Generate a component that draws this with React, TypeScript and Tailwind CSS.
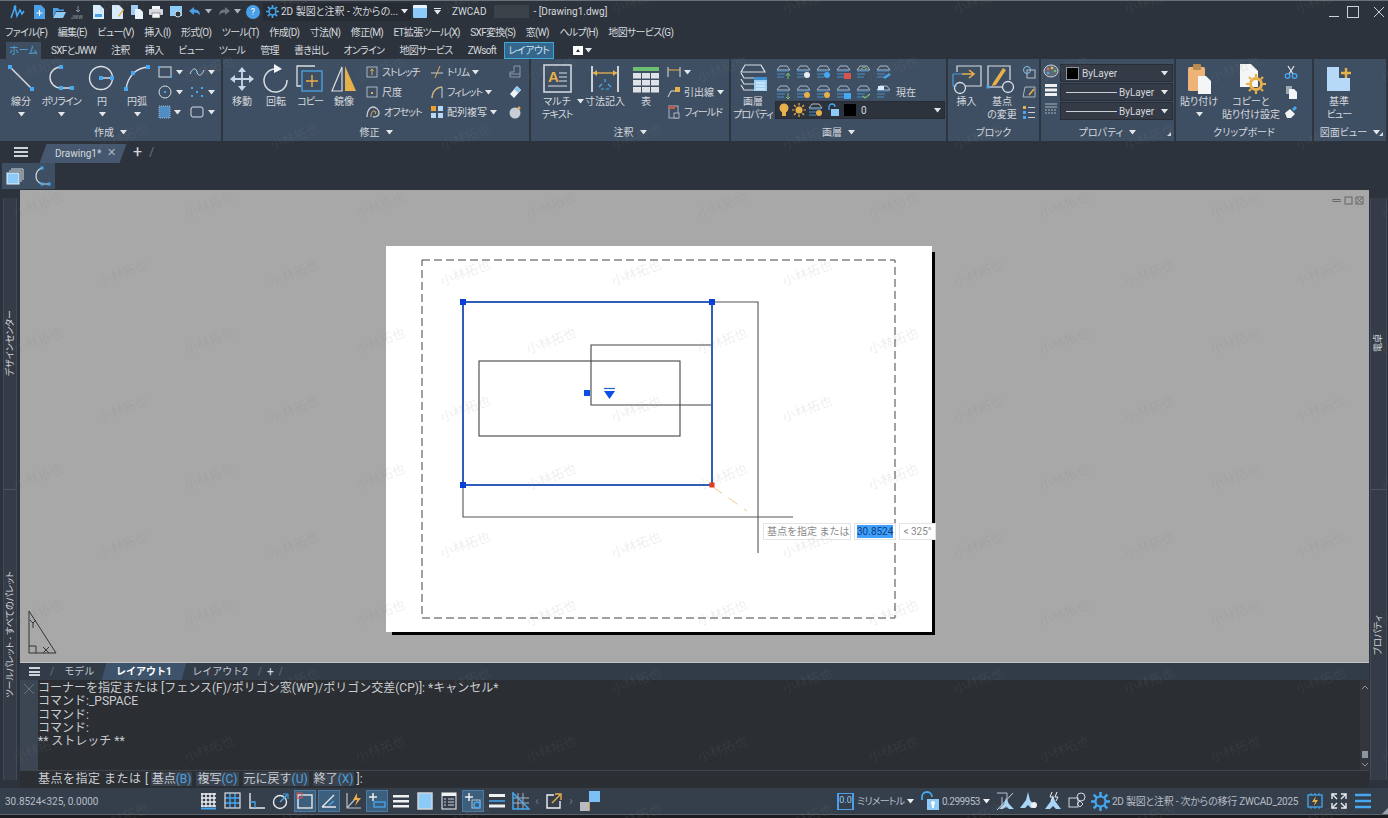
import type { ReactNode } from "react";

const W = "#d9dee4";
const BL = "#45a8f0";
const YE = "#e8b04a";

const Svg = ({ w = 32, h = 32, children }: { w?: number; h?: number; children: ReactNode }) => (
  <svg width={w} height={h} viewBox={`0 0 ${w} ${h}`} fill="none" className="block shrink-0">
    {children}
  </svg>
);

const Caret = ({ c = "#e4e7ea" }: { c?: string }) => (
  <svg width="7" height="5" viewBox="0 0 7 5" className="block shrink-0">
    <path d="M0 0h7L3.5 4.5z" fill={c} />
  </svg>
);

const Sq = ({ x, y, s = 4, c = BL }: { x: number; y: number; s?: number; c?: string }) => (
  <rect x={x - s / 2} y={y - s / 2} width={s} height={s} fill={c} />
);

// kana labels in the ribbon run narrower than kanji
const K = ({ children }: { children: ReactNode }) => <span className="tracking-[-1px]">{children}</span>;

// ---- big ribbon icons
const ILine = () => (
  <Svg>
    <path d="M5 4 27 26" stroke={W} strokeWidth="1.4" />
    <Sq x={5} y={4} />
    <Sq x={27} y={26} />
  </Svg>
);
const IPoly = () => (
  <Svg>
    <path d="M16 4A11 10.5 0 0 0 16 25H27" stroke={W} strokeWidth="1.4" />
    <Sq x={16} y={4} />
    <Sq x={16} y={25} />
    <Sq x={27} y={25} />
  </Svg>
);
const ICircle = () => (
  <Svg>
    <circle cx="15" cy="15" r="11.5" stroke={W} strokeWidth="1.4" />
    <path d="M15 15H27" stroke={W} strokeWidth="1.4" />
    <Sq x={15} y={15} />
    <Sq x={26} y={15} />
  </Svg>
);
const IArc = () => (
  <Svg>
    <path d="M5 26C7 13 15 5 27 4" stroke={W} strokeWidth="1.4" />
    <Sq x={5} y={26} />
    <Sq x={12} y={10} />
    <Sq x={27} y={4} />
  </Svg>
);
const IMove = () => (
  <Svg>
    <path d="M16 7V25M7 16H25" stroke="#c8d6e6" strokeWidth="1.800" />
    <path d="M16 4l4 5h-8zM16 28l4-5h-8zM4 16l5-4v8zM28 16l-5-4v8z" fill="#c8d6e6" />
  </Svg>
);
const IRotate = () => (
  <Svg>
    <path d="M15 6A11.500 11.500 0 1 0 27 17" stroke={W} strokeWidth="1.5" />
    <path d="M14 1l8 5-8 4z" fill="#f2f4f6" />
  </Svg>
);
const ICopy = () => (
  <Svg>
    <path d="M21 3H3V23H7" stroke={W} strokeWidth="1.3" />
    <rect x="8" y="8" width="20" height="20" stroke="#4a9ad8" strokeWidth="1.5" />
    <path d="M18 12V24M12 18H24" stroke={YE} strokeWidth="1.4" />
  </Svg>
);
const IMirror = () => (
  <Svg>
    <path d="M14 4V28H4z" stroke={W} strokeWidth="1.2" />
    <path d="M17 3V28H28z" fill={YE} />
  </Svg>
);
const IMtext = () => (
  <Svg>
    <rect x="3" y="2" width="27" height="27" stroke="#cfd5dc" strokeWidth="1.600" />
    <text x="7" y="19" fontSize="15" fontWeight="700" fill={YE} fontFamily="'Liberation Sans',sans-serif">A</text>
    <path d="M18 10h8M18 14h8M18 18h8M7 23h19" stroke={W} strokeWidth="1.200" />
  </Svg>
);
const IDim = () => (
  <Svg w={32}>
    <path d="M3 3V29M29 3V29" stroke={W} strokeWidth="1.800" />
    <path d="M4 10H28" stroke={YE} strokeWidth="1.300" />
    <path d="M4 10l4-3v6zM28 10l-4-3v6z" fill={YE} />
    <path d="M10 24l3-3M22 24l-3-3M16 19v-3" stroke={BL} strokeWidth="1.300" />
    <path d="M12 26h3M17 26h3" stroke={BL} strokeWidth="1.200" />
  </Svg>
);
const ITable = () => (
  <Svg w={28}>
    <rect x="1" y="4" width="26" height="4" fill="#6fbf73" />
    {[10, 17, 24].flatMap((y) =>
      [1, 10, 19].map((x) => <rect key={`${x}-${y}`} x={x} y={y} width="8" height="5.500" fill="#dfe3e7" />)
    )}
  </Svg>
);
const ILayerProps = () => (
  <Svg w={28} h={32}>
    <path d="M6 2H22L26 9H2z" stroke={W} strokeWidth="1.200" />
    <path d="M2 10 5 15H18M2 16 5 21H16M2 22 5 27H16" stroke={W} strokeWidth="1.200" />
    <rect x="15" y="14" width="13" height="14" fill="#9fd0f6" />
    <rect x="15" y="14" width="13" height="3" fill="#3f8fd0" />
    <path d="M17 20h9M17 23h9M17 26h9" stroke="#f2f6fa" strokeWidth="1" />
  </Svg>
);
const IInsert = () => (
  <Svg w={34}>
    <path d="M7 9V3H31V23H15" stroke={W} strokeWidth="1.200" />
    <path d="M3 11H12M3 11V23H7" stroke="#4a9ad8" strokeWidth="1.200" />
    <path d="M12 11H23M19 7l5 4-5 4" stroke={YE} strokeWidth="1.600" />
    <circle cx="10" cy="25" r="5.500" stroke={W} strokeWidth="1.300" />
  </Svg>
);
const IBase = () => (
  <Svg w={34}>
    <path d="M3 24V3H25V17" stroke={W} strokeWidth="1.200" />
    <path d="M3 24H18" stroke={W} strokeWidth="1.200" />
    <path d="M8 20 18 5l3 2-10 15-4 1z" fill={YE} />
    <circle cx="23" cy="24" r="5.500" stroke={W} strokeWidth="1.300" />
    <Sq x={3} y={24} s={3} />
  </Svg>
);
const IPaste = () => (
  <Svg w={26}>
    <rect x="2" y="4" width="17" height="24" rx="1.500" fill="#eeb477" />
    <rect x="7" y="1" width="8" height="6" rx="1" fill="#b98a52" />
    <path d="M12 13H20L25 18V31H12z" fill="#f4f5f6" />
  </Svg>
);
const ICopyPaste = () => (
  <Svg w={30}>
    <path d="M4 1H15L22 8V24H4z" fill="#f4f5f6" />
    <circle cx="20" cy="21" r="5.500" stroke={YE} strokeWidth="3" />
    <path d="M20 11V14M20 28V31M10 21H13M27 21H30M13 14l2 2M25 26l2 2M27 14l-2 2M15 26l-2 2" stroke={YE} strokeWidth="2.200" />
  </Svg>
);
const IBaseView = () => (
  <Svg w={26} h={26}>
    <path d="M1 1H13V12H24V25H1z" fill="#b6d9f8" />
    <path d="M15 7H25M20 2V12" stroke={YE} strokeWidth="2.400" />
  </Svg>
);

// ---- small ribbon icons
const SRect = () => (
  <Svg w={16} h={14}>
    <rect x="2" y="2" width="12" height="10" stroke={W} />
    <Sq x={2} y={2} s={2} />
    <Sq x={14} y={12} s={2} />
  </Svg>
);
const SSpline = () => (
  <Svg w={16} h={14}>
    <path d="M1 9C4 2 7 3 8 7s4 5 7-2" stroke={W} />
    <Sq x={8} y={7} s={2} />
  </Svg>
);
const SEllipse = () => (
  <Svg w={16} h={14}>
    <circle cx="8" cy="7" r="6" stroke={W} />
    <Sq x={8} y={7} s={2} />
  </Svg>
);
const SPoints = () => (
  <Svg w={16} h={14}>
    {[[3, 3], [13, 3], [8, 7], [3, 11], [13, 11]].map(([x, y]) => (
      <Sq key={`${x}${y}`} x={x} y={y} s={2} />
    ))}
  </Svg>
);
const SHatch = () => (
  <Svg w={14} h={14}>
    <rect x="2" y="1" width="11" height="12" fill="#4f8ec4" stroke="#9db4c9" strokeDasharray="1 1" />
  </Svg>
);
const SRound = () => (
  <Svg w={16} h={14}>
    <rect x="2" y="2" width="12" height="10" rx="2" stroke={W} />
  </Svg>
);
const SStretch = () => (
  <Svg w={14} h={14}>
    <rect x="2" y="2" width="10" height="10" stroke="#aab4c0" />
    <path d="M7 10V4M5.500 6 7 4l1.500 2" stroke={YE} />
  </Svg>
);
const SScale = () => (
  <Svg w={14} h={14}>
    <rect x="2" y="2" width="10" height="10" stroke="#aab4c0" />
    <rect x="6" y="7" width="2" height="2" fill={YE} />
  </Svg>
);
const SOffset = () => (
  <Svg w={16} h={14}>
    <path d="M2 12C2 5 5 2 8 2s6 3 6 6-2 4-6 4" stroke="#c9cfd6" strokeWidth="1.300" />
    <path d="M6 12C6 8 7 6 9 6s2 2 1 3" stroke={YE} />
  </Svg>
);
const STrim = () => (
  <Svg w={14} h={14}>
    <path d="M1 8H13" stroke="#c9cfd6" />
    <path d="M10 1 5 13" stroke={YE} />
  </Svg>
);
const SFillet = () => (
  <Svg w={14} h={14}>
    <path d="M2 13C2 6 6 2 12 2V13" stroke="#c9cfd6" />
    <path d="M2 13C3 6 7 3 12 2" stroke={YE} />
  </Svg>
);
const SArray = () => (
  <Svg w={14} h={14}>
    <rect x="1" y="1" width="5" height="5" fill="#f0a030" />
    <rect x="8" y="1" width="5" height="5" fill="#b5d8f5" />
    <rect x="1" y="8" width="5" height="5" fill="#b5d8f5" />
    <rect x="8" y="8" width="5" height="5" fill="#b5d8f5" />
  </Svg>
);
const SEraseBox = () => (
  <Svg w={14} h={14}>
    <path d="M6 1H12V12H2V7H6z" stroke="#8d98a5" />
    <path d="M2 9H12" stroke="#8d98a5" />
  </Svg>
);
const SEraser = () => (
  <Svg w={14} h={14}>
    <path d="M9 1l4 4-7 8-4-4z" fill="#f1f3f5" />
    <path d="M9 1l4 4-3 3-4-4z" fill="#8ec6f2" />
  </Svg>
);
const SBomb = () => (
  <Svg w={14} h={14}>
    <circle cx="7" cy="8" r="5.500" fill="#c9ced4" />
    <circle cx="11" cy="3" r="1.500" fill={YE} />
  </Svg>
);
const SDimLin = () => (
  <Svg w={14} h={14}>
    <path d="M1 2V12M13 2V12" stroke={W} />
    <path d="M1 5H13" stroke={YE} />
  </Svg>
);
const SLeader = () => (
  <Svg w={14} h={14}>
    <path d="M1 12 4 6H8" stroke={W} />
    <rect x="8" y="2" width="5" height="5" fill={YE} />
  </Svg>
);
const SField = () => (
  <Svg w={14} h={14}>
    <rect x="2" y="1" width="9" height="12" stroke="#aab4c0" />
    <rect x="2" y="1" width="6" height="3" fill="#c25a4f" />
    <rect x="7" y="8" width="5" height="5" stroke="#aab4c0" fill="#3f4f63" />
  </Svg>
);
const Layer = ({ children }: { children?: ReactNode }) => (
  <Svg w={16} h={16}>
    <path d="M4 2H11L14 6H1z" stroke="#aeb8c4" />
    <path d="M1 7H13M1 10H9M1 13H8" stroke="#4a8ec6" />
    {children}
  </Svg>
);
const SmallPlace = () => (
  <Svg w={14} h={14}>
    <rect x="5" y="5" width="8" height="8" rx="0" stroke="#b8c0ca" />
    <circle cx="5" cy="5" r="3.500" stroke="#8ac3ee" />
  </Svg>
);
const SEditBlock = () => (
  <Svg w={14} h={14}>
    <path d="M3 2H13V12H1z" stroke="#aab4c0" />
    <path d="M7 10l5-6" stroke={YE} strokeWidth="1.600" />
  </Svg>
);
const SList = () => (
  <Svg w={14} h={14}>
    <rect x="1" y="1" width="3" height="3" fill={YE} />
    <rect x="1" y="6" width="3" height="3" fill={BL} />
    <rect x="1" y="11" width="3" height="3" fill={BL} />
    <path d="M6 2.500H13M6 7.500H13M6 12.500H13" stroke="#c9cfd6" />
  </Svg>
);
const Palette = () => (
  <Svg w={16} h={14}>
    <ellipse cx="8" cy="7" rx="7" ry="6" stroke="#cbd2da" fill="#5d6672" />
    <circle cx="5" cy="5" r="1.300" fill="#e06a5b" />
    <circle cx="9" cy="4" r="1.300" fill="#e8c34a" />
    <circle cx="12" cy="7" r="1.300" fill="#6fbf73" />
    <circle cx="5" cy="9" r="1.300" fill={BL} />
  </Svg>
);
const LineW = () => (
  <Svg w={14} h={14}>
    <rect x="1" y="1" width="12" height="3" fill="#eef0f2" />
    <rect x="1" y="5.500" width="12" height="3" fill="#eef0f2" />
    <rect x="1" y="10" width="12" height="3" fill="#eef0f2" />
  </Svg>
);
const LineT = () => (
  <Svg w={14} h={14}>
    <path d="M1 2H13M1 5H13" stroke="#aab4c0" />
    <path d="M1 8H13M1 11H13" stroke="#aab4c0" strokeDasharray="2 1" />
  </Svg>
);
const SCut = () => (
  <Svg w={14} h={14}>
    <path d="M4 1l5 8M10 1 5 9" stroke="#e3e6ea" strokeWidth="1.200" />
    <circle cx="3.500" cy="11" r="2.300" stroke={BL} strokeWidth="1.300" />
    <circle cx="10.500" cy="11" r="2.300" stroke={BL} strokeWidth="1.300" />
  </Svg>
);
const SCopyDoc = () => (
  <Svg w={14} h={14}>
    <path d="M2 1H8V9H2z" fill="#9fa8b2" />
    <path d="M5 4H10L13 7V14H5z" fill="#f4f5f6" />
  </Svg>
);
const SBrush = () => (
  <Svg w={14} h={14}>
    <path d="M1 8 6 4l5 5-4 4H3z" fill="#f2f3f5" />
    <path d="M8 4l3-3 2 2-3 3z" fill={BL} />
  </Svg>
);
const Gear = ({ s = 14, c = BL }: { s?: number; c?: string }) => (
  <svg width={s} height={s} viewBox="0 0 14 14" fill="none" className="block shrink-0">
    <circle cx="7" cy="7" r="3.700" stroke={c} strokeWidth="1.600" />
    <path d="M7 0V3M7 11V14M0 7H3M11 7H14M2 2 4 4M10 10 12 12M12 2 10 4M4 10 2 12" stroke={c} strokeWidth="1.800" />
  </svg>
);
const Sun = ({ s = 14 }: { s?: number }) => (
  <svg width={s} height={s} viewBox="0 0 14 14" fill="none" className="block shrink-0">
    <circle cx="7" cy="7" r="3.500" fill={YE} />
    <path d="M7 0V2.500M7 11.500V14M0 7H2.500M11.500 7H14M2 2 3.800 3.800M10.200 10.200 12 12M12 2 10.200 3.800M3.800 10.200 2 12" stroke={YE} strokeWidth="1.200" />
  </svg>
);

// ---- layout helpers
const BigTool = ({ w, icon, label, caret }: { w: string; icon: ReactNode; label: ReactNode; caret?: boolean }) => (
  <div className={`${w} shrink-0 flex flex-col items-center pt-[4px]`}>
    <div className="h-[32px] flex items-center justify-center">{icon}</div>
    <div className="text-[10px] leading-[13px] text-center whitespace-nowrap">{label}</div>
    {caret && (
      <div className="h-[13px] flex items-center">
        <Caret />
      </div>
    )}
  </div>
);

const SmallTool = ({ icon, label, caret }: { icon: ReactNode; label?: ReactNode; caret?: boolean }) => (
  <div className="h-[20px] flex items-center gap-[3px] whitespace-nowrap text-[10px]">
    {icon}
    {label && <span>{label}</span>}
    {caret && <Caret />}
  </div>
);

const Panel = ({ w, title, corner, plain, children }: { w: string; title: ReactNode; corner?: boolean; plain?: boolean; children: ReactNode }) => (
  <div className={`${w} shrink-0 h-full flex flex-col border-r-2 border-[#2f353e] relative`}>
    <div className="h-[66px] flex">{children}</div>
    <div className="h-[15px] flex items-center justify-center gap-[6px] text-[10px] text-[#d3d8de]">
      {title}
      {!plain && <Caret />}
    </div>
    {corner && <div className="absolute right-[3px] bottom-[5px] w-0 h-0 border-l-[4px] border-l-transparent border-b-[4px] border-b-[#d3d8de]" />}
  </div>
);

const Col = ({ w, children }: { w: string; children: ReactNode }) => (
  <div className={`${w} shrink-0 flex flex-col pt-[3px]`}>{children}</div>
);

const LineSelect = ({ children }: { children: ReactNode }) => (
  <div className="h-[18px] w-[113px] bg-[#343b46] border border-[#282d35] flex items-center pl-[5px] pr-[4px] text-[10px] text-[#d5d9de]">
    {children}
    <span className="ml-auto">
      <Caret />
    </span>
  </div>
);

const SideTab = ({ label }: { label: string }) => (
  <div className="flex-1 flex items-center justify-center border-t border-[#4a5461] first:border-t-0">
    <span className="[writing-mode:vertical-rl] [text-orientation:sideways] rotate-180 text-[9px] leading-none text-[#d5d9de] whitespace-nowrap">{label}</span>
  </div>
);

const StatBtn = ({ on, children }: { on?: boolean; children: ReactNode }) => (
  <div className={`w-[22px] h-[22px] flex items-center justify-center border ${on ? "bg-[#3d5f7e] border-[#4b7ba3]" : "border-transparent"}`}>
    {children}
  </div>
);

const Chip = ({ a, b }: { a: string; b: string }) => (
  <span className="bg-[#3a424d] px-[1px] mx-[2px]">
    {a}
    <span className="text-[#4aa3e0]">{b}</span>
  </span>
);

// watermark rows repeat every 68px, every other row shifted by half a step
const marks: { x: number; y: number }[] = [];
for (let k = -5; k <= 7; k++) {
  const start = k % 2 === 0 ? 38 : 123;
  for (let i = 0; i < 9; i++) marks.push({ x: start + i * 171, y: 340 + k * 68 });
}

const menu = ["ファイル(F)", "編集(E)", "ビュー(V)", "挿入(I)", "形式(O)", "ツール(T)", "作成(D)", "寸法(N)", "修正(M)", "ET拡張ツール(X)", "SXF変換(S)", "窓(W)", "ヘルプ(H)", "地図サービス(G)"];
const tabs = ["SXFとJWW", "注釈", "挿入", "ビュー", "ツール", "管理", "書き出し", "オンライン", "地図サービス", "ZWsoft"];
const cmdLines = ["コーナーを指定または [フェンス(F)/ポリゴン窓(WP)/ポリゴン交差(CP)]: *キャンセル*", "コマンド:_PSPACE", "コマンド:", "コマンド:", "** ストレッチ **"];

const QuickDoc = ({ c = "#cfe6fa", children }: { c?: string; children?: ReactNode }) => (
  <Svg w={14} h={16}>
    <path d="M2 1H9L13 5V15H2z" fill={c} />
    {children}
  </Svg>
);

export default function App() {
  return (
    <div className="w-[1388px] h-[818px] relative overflow-hidden bg-[#2d333c] text-[#d5d9de] flex flex-col [font-feature-settings:'palt'] font-['Roboto','Noto_Sans_CJK_JP',sans-serif]">
      {/* title bar */}
      <div className="h-[22px] shrink-0 flex items-center border-t border-[#6b7078] text-[10px] relative">
        <div className="w-[40px] pl-[9px]">
          <Svg w={16} h={16}>
            <path d="M2 14 6 3l2 9 3-6 2 4 2-3" stroke={BL} strokeWidth="1.600" />
            <circle cx="6" cy="3" r="1.500" fill={BL} />
          </Svg>
        </div>
        <div className="flex items-center gap-[5.500px] -ml-[8px]">
          <QuickDoc c="#4a9fe6"><path d="M7.500 6V12M4.500 9H10.500" stroke="#fff" /></QuickDoc>
          <Svg w={14} h={16}>
            <path d="M1 4H6L7 5.500H12V7H4L1 13z" fill="#4a9fe6" />
            <path d="M4 8H14L11 14H1z" fill="#8ccaf7" />
          </Svg>
          <Svg w={14} h={16}>
            <path d="M7 2V8M5 6l2 2 2-2" stroke="#8d98a5" />
            <text x="0" y="15" fontSize="5" fill="#9aa3ad">JWW</text>
          </Svg>
          <QuickDoc c="#d8ecfc"><rect x="4" y="10" width="7" height="3" fill="#4a9fe6" /></QuickDoc>
          <QuickDoc c="#d8ecfc"><path d="M8 12l5-7 1 1-5 7z" fill={YE} /></QuickDoc>
          <Svg w={14} h={16}>
            <path d="M1 1H8V11H1z" fill="#9fcdf2" />
            <path d="M5 5H10L13 8V15H5z" fill="#e8f3fc" />
          </Svg>
          <Svg w={14} h={16}>
            <rect x="3" y="2" width="8" height="4" fill="#f2f4f6" />
            <rect x="0" y="5" width="14" height="6" rx="1" fill="#d6dade" />
            <rect x="3" y="9" width="8" height="5" fill="#f2f4f6" stroke="#444" strokeWidth=".5" />
          </Svg>
          <Svg w={14} h={16}>
            <rect x="1" y="2" width="12" height="10" fill="#8ccaf7" />
            <circle cx="9" cy="10" r="3" fill="#2d333c" stroke="#d5d9de" />
          </Svg>
          <Svg w={14} h={16}>
            <path d="M6 3 1 7l5 4V8.500c3 0 5 1 6 3 0-4-2-6-6-6z" fill="#4a9fe6" />
          </Svg>
          <div className="-ml-[3px]"><Caret c="#aeb5be" /></div>
          <Svg w={14} h={16}>
            <path d="M8 3l5 4-5 4V8.500c-3 0-5 1-6 3 0-4 2-6 6-6z" fill="#6c7480" />
          </Svg>
          <div className="-ml-[3px]"><Caret c="#aeb5be" /></div>
          <div className="w-[14px] h-[14px] rounded-full bg-[#4a9fe6] text-white text-[9px] leading-[14px] text-center">?</div>
        </div>
        <div className="ml-[3px] w-[148px] h-[18px] bg-[#272c34] rounded-[2px] flex items-center pl-[3px] pr-[3px] gap-[2px]">
          <Gear s={13} />
          <span className="whitespace-nowrap">2D 製図と注釈 - 次からの...</span>
          <span className="ml-auto"><Caret /></span>
        </div>
        <div className="ml-[2px] w-[14px] h-[13px] bg-[#8ccaf7] rounded-[1px] border-t-[3px] border-[#e8f3fc]" />
        <div className="ml-[7px] flex flex-col gap-[1px]">
          <div className="w-[7px] h-[1px] bg-[#e4e7ea]" />
          <Caret />
        </div>
        <span className="ml-[11px]">ZWCAD</span>
        <div className="ml-[8px] w-[35px] h-[13px] bg-[#3c4249]" />
        <span className="ml-[4px] whitespace-nowrap">- [Drawing1.dwg]</span>
        <div className="ml-auto flex items-center gap-[8px] pr-[1px]">
          <div className="w-[10px] h-[1px] bg-[#cdd2d8] mt-[9px]" />
          <div className="w-[12px] h-[12px] border border-[#cdd2d8]" />
          <Svg w={20} h={12}>
            <path d="M7 1 17 11M17 1 7 11" stroke="#cdd2d8" />
          </Svg>
        </div>
      </div>

      {/* menu bar */}
      <div className="h-[20px] shrink-0 flex items-center pl-[5px] gap-[10.500px] text-[10px] tracking-[-0.7px] whitespace-nowrap">
        {menu.map((m) => (
          <span key={m}>{m}</span>
        ))}
      </div>

      {/* ribbon tabs */}
      <div className="h-[17px] shrink-0 flex items-stretch pl-[6px] text-[10px] whitespace-nowrap">
        <div className="w-[35px] bg-[#3f4f63] text-[#4ea6dc] flex items-center justify-center mr-[10px]">ホーム</div>
        <div className="w-[445px] flex items-center justify-between tracking-[-0.7px]">
          {tabs.map((t) => (
            <span key={t}>{t}</span>
          ))}
        </div>
        <div className="ml-[8px] w-[50px] bg-[#35678c] border border-[#3fa7d6] flex items-center justify-center text-[#cfe3f2] tracking-[-0.5px]">レイアウト</div>
        <div className="ml-[19px] flex items-center gap-[2px]">
          <div className="w-[10px] h-[9px] bg-white flex items-center justify-center">
            <div className="w-0 h-0 border-x-[2px] border-x-transparent border-b-[3px] border-b-[#333]" />
          </div>
          <Caret />
        </div>
      </div>

      {/* ribbon */}
      <div className="h-[82px] shrink-0 bg-[#3f4f63] flex text-[#d5d9de]">
        <Panel w="w-[223px]" title="作成">
          <div className="w-[4px]" />
          <BigTool w="w-[34px]" icon={<ILine />} label="線分" caret />
          <BigTool w="w-[46px]" icon={<IPoly />} label={<K>ポリライン</K>} caret />
          <BigTool w="w-[36px]" icon={<ICircle />} label="円" caret />
          <BigTool w="w-[34px]" icon={<IArc />} label="円弧" caret />
          <div className="w-[3px]" />
          <Col w="w-[32px]">
            <SmallTool icon={<SRect />} caret />
            <SmallTool icon={<SEllipse />} caret />
            <SmallTool icon={<SHatch />} caret />
          </Col>
          <Col w="w-[30px]">
            <SmallTool icon={<SSpline />} caret />
            <SmallTool icon={<SPoints />} caret />
            <SmallTool icon={<SRound />} caret />
          </Col>
        </Panel>
        <Panel w="w-[308px]" title="修正">
          <div className="w-[2px]" />
          <BigTool w="w-[34px]" icon={<IMove />} label="移動" />
          <BigTool w="w-[34px]" icon={<IRotate />} label="回転" />
          <BigTool w="w-[34px]" icon={<ICopy />} label={<K>コピー</K>} />
          <BigTool w="w-[34px]" icon={<IMirror />} label="鏡像" />
          <div className="w-[4px]" />
          <Col w="w-[65px]">
            <SmallTool icon={<SStretch />} label={<K>ストレッチ</K>} />
            <SmallTool icon={<SScale />} label="尺度" />
            <SmallTool icon={<SOffset />} label={<K>オフセット</K>} />
          </Col>
          <Col w="w-[78px]">
            <SmallTool icon={<STrim />} label={<K>トリム</K>} caret />
            <SmallTool icon={<SFillet />} label={<K>フィレット</K>} caret />
            <SmallTool icon={<SArray />} label="配列複写" caret />
          </Col>
          <Col w="w-[16px]">
            <SmallTool icon={<SEraseBox />} />
            <SmallTool icon={<SEraser />} />
            <SmallTool icon={<SBomb />} />
          </Col>
        </Panel>
        <Panel w="w-[200px]" title="注釈">
          <div className="w-[2px]" />
          <BigTool
            w="w-[48px]"
            icon={<IMtext />}
            label={
              <span className="flex flex-col items-center">
                <span className="relative">
                  マルチ
                  <span className="absolute -right-[13px] top-[4px]">
                    <Caret />
                  </span>
                </span>
                <K>テキスト</K>
              </span>
            }
          />
          <BigTool w="w-[48px]" icon={<IDim />} label="寸法記入" />
          <BigTool w="w-[34px]" icon={<ITable />} label="表" />
          <div className="w-[4px]" />
          <Col w="w-[60px]">
            <SmallTool icon={<SDimLin />} caret />
            <SmallTool icon={<SLeader />} label="引出線" caret />
            <SmallTool icon={<SField />} label={<K>フィールド</K>} />
          </Col>
        </Panel>
        <Panel w="w-[217px]" title="画層">
          <BigTool w="w-[44px]" icon={<ILayerProps />} label={<span className="flex flex-col"><span>画層</span><K>プロパティ</K></span>} />
          <div className="w-[171px] shrink-0 flex flex-col pt-[3px]">
            <div className="h-[20px] flex items-center gap-[4px] pl-[1px]">
              <Layer><path d="M12 9v6M10 12l2-3 2 3" stroke="#6fbf73" /></Layer>
              <Layer><circle cx="11" cy="11" r="3" fill="#e8edf2" /></Layer>
              <Layer><circle cx="11" cy="11" r="3" fill={BL} /></Layer>
              <Layer><rect x="8" y="9" width="7" height="6" fill="#d6544a" /></Layer>
              <Layer><path d="M5 5l3-2 3 2" stroke="#6fbf73" /></Layer>
              <Layer><path d="M8 14l6-4" stroke={BL} strokeWidth="2.500" /></Layer>
            </div>
            <div className="h-[20px] flex items-center gap-[4px] pl-[1px] text-[10px]">
              <Layer><path d="M12 9v6M10 13l2 2 2-2" stroke="#6fbf73" /></Layer>
              <Layer><circle cx="11" cy="11" r="3" fill={YE} /></Layer>
              <Layer><circle cx="11" cy="11" r="3" fill={YE} /></Layer>
              <Layer><rect x="8" y="9" width="7" height="6" fill={BL} /></Layer>
              <Layer><path d="M7 12l2 2 5-4" stroke="#6fbf73" strokeWidth="1.300" /></Layer>
              <Layer><rect x="2" y="2" width="6" height="4" fill="#d8ecfc" /></Layer>
              <span>現在</span>
            </div>
            <div className="-mt-[1px] h-[18px] w-[170px] bg-[#2d333c] border border-[#282d35] flex items-center pl-[2px] pr-[3px] gap-[2px] text-[10px]">
              <Svg w={12} h={14}>
                <circle cx="6" cy="5" r="4.500" fill={YE} />
                <rect x="4" y="9" width="4" height="4" fill={YE} />
              </Svg>
              <Sun />
              <Layer><circle cx="11" cy="11" r="3" fill={YE} /></Layer>
              <Svg w={14} h={14}>
                <path d="M3 7V4a3 3 0 0 1 6 0" stroke={BL} strokeWidth="1.300" />
                <rect x="5" y="6" width="8" height="7" fill="#8ccaf7" />
              </Svg>
              <div className="w-[12px] h-[12px] bg-black ml-[2px]" />
              <span className="ml-[3px]">0</span>
              <span className="ml-auto"><Caret /></span>
            </div>
          </div>
        </Panel>
        <Panel w="w-[93px]" title="ブロック" plain>
          <BigTool w="w-[37px]" icon={<IInsert />} label="挿入" />
          <BigTool w="w-[34px]" icon={<IBase />} label={<span className="flex flex-col"><span>基点</span><span>の変更</span></span>} />
          <Col w="w-[20px]">
            <div className="pl-[3px]"><SmallTool icon={<SmallPlace />} /></div>
            <div className="pl-[3px]"><SmallTool icon={<SEditBlock />} /></div>
            <div className="pl-[3px]"><SmallTool icon={<SList />} /></div>
          </Col>
        </Panel>
        <Panel w="w-[135px]" title="プロパティ" corner>
          <div className="w-[19px] shrink-0 flex flex-col pt-[5px] items-center gap-[5px]">
            <div className="h-[14px]"><Palette /></div>
            <div className="h-[14px]"><LineW /></div>
            <div className="h-[14px]"><LineT /></div>
          </div>
          <div className="flex flex-col pt-[5px] gap-[1px]">
            <LineSelect>
              <div className="w-[13px] h-[13px] bg-black border border-[#8d96a0] mr-[3px]" />
              ByLayer
            </LineSelect>
            <LineSelect>
              <div className="w-[51px] h-[1px] bg-[#c9ced4] mr-[2px]" />
              ByLayer
            </LineSelect>
            <LineSelect>
              <div className="w-[51px] h-[1px] bg-[#c9ced4] mr-[2px]" />
              ByLayer
            </LineSelect>
          </div>
        </Panel>
        <Panel w="w-[138px]" title="クリップボード" plain>
          <BigTool w="w-[46px]" icon={<IPaste />} label="貼り付け" caret />
          <BigTool w="w-[58px]" icon={<ICopyPaste />} label={<span className="flex flex-col"><span>コピーと</span><span>貼り付け設定</span></span>} />
          <Col w="w-[24px]">
            <div className="pl-[4px]"><SmallTool icon={<SCut />} /></div>
            <div className="pl-[4px]"><SmallTool icon={<SCopyDoc />} /></div>
            <div className="pl-[4px]"><SmallTool icon={<SBrush />} /></div>
          </Col>
        </Panel>
        <Panel w="w-[74px]" title="図面ビュー" corner>
          <BigTool w="w-[50px]" icon={<IBaseView />} label={<span className="flex flex-col"><span>基準</span><K>ビュー</K></span>} />
        </Panel>
      </div>

      {/* document tabs */}
      <div className="h-[22px] shrink-0 flex items-center text-[10px]">
        <div className="w-[43px] pl-[14px] flex flex-col gap-[2px]">
          <div className="w-[14px] h-[2px] bg-[#cfd4da]" />
          <div className="w-[14px] h-[2px] bg-[#cfd4da]" />
          <div className="w-[14px] h-[2px] bg-[#cfd4da]" />
        </div>
        <div className="w-[80px] h-[19px] mt-[3px] bg-[#46586f] -skew-x-[20deg] flex items-center pl-[12px] gap-[6px]">
          <span className="skew-x-[20deg] whitespace-nowrap">Drawing1*</span>
          <span className="skew-x-[20deg] text-[#aab4c0] text-[11px]">✕</span>
        </div>
        <span className="ml-[10px] text-[16px] leading-none">+</span>
        <span className="ml-[7px] text-[13px] text-[#6a7480]">/</span>
      </div>

      {/* open drawing toolbar */}
      <div className="h-[27px] shrink-0 pl-[2px]">
        <div className="w-[53px] h-[26px] bg-[#3f4f63] flex items-center pl-[3px] gap-[4px]">
          <Svg w={20} h={20}>
            <path d="M6 3H18V14" stroke={W} />
            <path d="M4 5H16V16" stroke={W} />
            <rect x="2" y="7" width="12" height="11" fill="#8ccaf7" stroke="#eef1f4" />
          </Svg>
          <Svg w={22} h={22}>
            <path d="M13 3A9 8.500 0 0 0 13 19H20" stroke={W} strokeWidth="1.200" />
            <Sq x={13} y={3} s={3} />
            <Sq x={13} y={19} s={3} />
            <Sq x={20} y={19} s={3} />
          </Svg>
        </div>
      </div>

      {/* work area */}
      <div className="flex-1 min-h-0 flex">
        <div className="w-[20px] shrink-0 pt-[8px] pb-[8px] pl-[3px] pr-[3px]">
          <div className="w-[14px] h-full bg-[#353c47] border-x border-[#414a56] flex flex-col">
            <SideTab label="デザインセンター" />
            <SideTab label="ツールパレット - すべてのパレット" />
          </div>
        </div>

        <div className="w-[1349px] shrink-0 flex flex-col">
          {/* model space canvas */}
          <div className="h-[473px] shrink-0 relative bg-[#a8a8a8] border-b border-[#c4c4c4]">
            <svg viewBox="20 190 1349 473" width="1349" height="473" className="block" fill="none">
              <rect x="392" y="252" width="543" height="383" fill="#000" />
              <rect x="386" y="246" width="546" height="386" fill="#fff" />
              <rect x="422" y="260" width="473" height="358" stroke="#444" strokeDasharray="8 4" />
              <path d="M712 302H758V553M463 485V517H793" stroke="#555" strokeWidth="1.100" />
              <rect x="479" y="361" width="201" height="75" stroke="#444" strokeWidth="1.100" />
              <path d="M712 345H591V405H712" stroke="#444" strokeWidth="1.100" />
              <rect x="463" y="302" width="249" height="183" stroke="#2f5fb8" strokeWidth="2" />
              <path d="M713 487 747 511" stroke="#f4c98a" strokeDasharray="11 8" />
              <Sq x={463} y={302} s={6} c="#0a3fd8" />
              <Sq x={712} y={302} s={6} c="#0a3fd8" />
              <Sq x={463} y={485} s={6} c="#0a3fd8" />
              <Sq x={712} y={485} s={5} c="#e83a20" />
              <Sq x={587} y={393} s={6} c="#0a50e8" />
              <path d="M604 388.500H615" stroke="#2f5fb8" strokeWidth="1.200" />
              <path d="M604 391H615L609.500 399z" fill="#0a50e8" />
              {/* paper space UCS */}
              <path d="M29 611V653H56z" stroke="#333" />
              <path d="M29 646H36V653" stroke="#333" />
              <path d="M30 620l3 3 3-3M33 623v5M43 647l6 6M49 647l-6 6" stroke="#333" />
              {/* viewport controls */}
              <rect x="1333" y="199.500" width="7" height="2" stroke="#666" />
              <rect x="1345" y="197" width="7" height="7" stroke="#666" />
              <rect x="1356" y="197" width="7" height="7" stroke="#666" />
              <path d="M1357 198l5 5M1362 198l-5 5" stroke="#666" />
            </svg>
            {/* dynamic input */}
            <div className="absolute left-[743px] top-[333px] flex items-stretch gap-[3px] h-[17px] text-[10px] text-[#8a8a8a] whitespace-nowrap [font-feature-settings:normal]">
              <div className="w-[88px] bg-white border border-[#e4e4e4] pl-[3px] leading-[15px]">基点を指定 または</div>
              <div className="w-[42px] bg-white border border-[#e4e4e4] flex items-center justify-center">
                <span className="bg-[#3fa0ff] text-[#143f78] w-[36px] text-center leading-[13px]">30.8524</span>
              </div>
              <div className="w-[37px] bg-white border border-[#e4e4e4] text-center leading-[15px]">{"< 325°"}</div>
            </div>
          </div>

          {/* layout tabs */}
          <div className="h-[17px] shrink-0 bg-[#323c48] flex items-center text-[10px] [font-feature-settings:normal]">
            <div className="ml-[9px] flex flex-col gap-[1.500px]">
              <div className="w-[11px] h-[2px] bg-[#cfd4da]" />
              <div className="w-[11px] h-[2px] bg-[#cfd4da]" />
              <div className="w-[11px] h-[2px] bg-[#cfd4da]" />
            </div>
            <span className="ml-[10px] text-[#6a7480]">/</span>
            <span className="ml-[10px] w-[40px] text-[#c4c9cf]">モデル</span>
            <div className="w-[80px] h-[17px] bg-[#3c536b] -skew-x-[15deg] flex items-center justify-center">
              <span className="skew-x-[15deg] font-bold text-white">レイアウト1</span>
            </div>
            <span className="ml-[8px] text-[#c4c9cf]">レイアウト2</span>
            <span className="ml-[10px] text-[#6a7480]">/</span>
            <span className="ml-[5px] text-[12px]">+</span>
            <span className="ml-[5px] text-[#6a7480]">/</span>
          </div>

          {/* command window */}
          <div className="h-[91px] shrink-0 bg-[#2b2e33] flex border-b border-[#40454c] [font-feature-settings:normal]">
            <div className="w-[18px] shrink-0 bg-[#3c4653] flex justify-center pt-[2px]">
              <Svg w={14} h={14}>
                <path d="M2 2 12 12M12 2 2 12" stroke="#687280" />
              </Svg>
            </div>
            <div className="flex-1 pt-[2px] text-[12px] leading-[13.300px] text-[#c9cdd2] whitespace-nowrap">
              {cmdLines.map((l) => (
                <div key={l}>{l}</div>
              ))}
            </div>
            <div className="w-[9px] shrink-0 bg-[#33373d] flex flex-col items-center justify-between pt-[5px] pb-[3px]">
              <Svg w={8} h={5}>
                <path d="M1 4 4 1l3 3" stroke="#8d96a0" />
              </Svg>
              <div className="flex-1" />
              <div className="w-[6px] h-[7px] bg-[#8d96a0] mb-[4px]" />
              <Svg w={8} h={5}>
                <path d="M1 1 4 4l3-3" stroke="#8d96a0" />
              </Svg>
            </div>
          </div>
          <div className="h-[17px] shrink-0 bg-[#2b2e33] pl-[18px] text-[12px] leading-[17px] text-[#c9cdd2] whitespace-nowrap [font-feature-settings:normal]">
            <span className="tracking-[0.5px]">基点を指定 または [</span><Chip a="基点" b="(B)" /><Chip a="複写" b="(C)" /><Chip a="元に戻す" b="(U)" /><Chip a="終了" b="(X)" />]:
          </div>
        </div>

        <div className="w-[19px] shrink-0 pt-[8px] pb-[8px] pl-[1px] pr-[1px]">
          <div className="h-full bg-[#353c47] border-x border-[#414a56] flex flex-col">
            <SideTab label="電卓" />
            <SideTab label="プロパティ" />
          </div>
        </div>
      </div>

      {/* status bar */}
      <div className="h-[27px] shrink-0 bg-[#353f4c] flex items-center text-[10px] text-[#b7bdc5] whitespace-nowrap border-b border-[#5b636d] relative">
        <span className="w-[198px] pl-[5px] shrink-0">30.8524&lt;325, 0.0000</span>
        <div className="flex items-center gap-[2px]">
          <StatBtn>
            <Svg w={18} h={18}>
              <path d="M2 1V15M6 1V15M10 1V15M14 1V15M1 2H16M1 6H16M1 10H16M1 14H16" stroke="#eef0f2" strokeWidth="1.400" />
              <path d="M1 16.500H16" stroke={BL} strokeWidth="2" />
            </Svg>
          </StatBtn>
          <StatBtn>
            <Svg w={18} h={18}>
              <path d="M6 1V16M11 1V16M1 6H16M1 11H16" stroke={BL} strokeWidth="1.400" />
              <rect x="1" y="1" width="15" height="15" stroke="#d9dee4" strokeWidth="1.200" />
            </Svg>
          </StatBtn>
          <StatBtn>
            <Svg w={18} h={18}>
              <path d="M2 1V16H17" stroke="#e6e9ec" strokeWidth="1.400" />
              <path d="M2 10H7V16" stroke={BL} strokeWidth="1.300" />
            </Svg>
          </StatBtn>
          <StatBtn>
            <Svg w={18} h={18}>
              <circle cx="8" cy="10" r="6.500" stroke="#e6e9ec" strokeWidth="1.400" />
              <path d="M8 10 15 3" stroke={BL} strokeWidth="1.400" />
              <path d="M11 2H16V7" stroke={BL} />
            </Svg>
          </StatBtn>
          <StatBtn on>
            <Svg w={18} h={18}>
              <rect x="2" y="3" width="14" height="13" stroke="#e6e9ec" strokeWidth="1.400" />
              <rect x="1" y="1" width="5" height="5" stroke="#e0524a" />
            </Svg>
          </StatBtn>
          <StatBtn on>
            <Svg w={18} h={18}>
              <path d="M2 15 14 3M2 15H16" stroke="#e6e9ec" strokeWidth="1.400" />
              <path d="M9 13 14 9" stroke={BL} strokeWidth="1.400" />
            </Svg>
          </StatBtn>
          <StatBtn>
            <Svg w={18} h={18}>
              <path d="M3 1V16H17M3 16 13 5" stroke="#b8c0ca" strokeWidth="1.200" />
              <path d="M13 1 9 8H13L11 14 17 6H13z" fill={YE} />
            </Svg>
          </StatBtn>
          <StatBtn on>
            <Svg w={18} h={18}>
              <path d="M5 1V9M1 5H9" stroke="#eef0f2" strokeWidth="1.500" />
              <rect x="6" y="10" width="11" height="5" stroke={BL} strokeWidth="1.300" />
            </Svg>
          </StatBtn>
          <StatBtn>
            <Svg w={18} h={18}>
              <rect x="1" y="3" width="16" height="2.500" fill="#eef0f2" />
              <rect x="1" y="8" width="16" height="2.500" fill="#eef0f2" />
              <rect x="1" y="13" width="16" height="2.500" fill="#eef0f2" />
            </Svg>
          </StatBtn>
          <StatBtn>
            <Svg w={18} h={18}>
              <rect x="2" y="1" width="14" height="16" fill="#8ccaf7" stroke="#d0d5da" strokeWidth="1.500" />
            </Svg>
          </StatBtn>
          <StatBtn>
            <Svg w={18} h={18}>
              <rect x="2" y="1" width="14" height="16" stroke="#d0d5da" strokeWidth="1.200" />
              <rect x="2" y="1" width="14" height="3" fill="#eef0f2" />
              <path d="M4 7H6M8 7H14M4 10H6M8 10H14M4 13H6M8 13H14" stroke="#d0d5da" />
            </Svg>
          </StatBtn>
          <StatBtn on>
            <Svg w={18} h={18}>
              <path d="M5 1V9M1 5H9" stroke="#eef0f2" strokeWidth="1.500" />
              <rect x="8" y="8" width="8" height="8" stroke="#b8c0ca" />
              <circle cx="13" cy="13" r="3" stroke={BL} strokeWidth="1.500" />
            </Svg>
          </StatBtn>
          <StatBtn>
            <Svg w={18} h={18}>
              <rect x="1" y="2" width="16" height="3" fill="#eef0f2" />
              <path d="M1 9H17" stroke={BL} strokeWidth="1.500" />
              <rect x="1" y="12.500" width="16" height="3" fill="#eef0f2" />
            </Svg>
          </StatBtn>
          <StatBtn>
            <Svg w={18} h={18}>
              <path d="M1 6H17M1 11H17M6 1V17M11 1V17" stroke="#aab4c0" />
              <path d="M1 1V17H17z" stroke={BL} strokeWidth="1.500" />
            </Svg>
          </StatBtn>
        </div>
        <span className="ml-[3px] text-[#6a7480] text-[13px]">‹</span>
        <div className="ml-[6px]">
          <Svg w={18} h={18}>
            <path d="M9 3H2V16H15V9" stroke="#eef0f2" strokeWidth="1.400" />
            <path d="M7 11 15 3M10 2H16V8" stroke={YE} strokeWidth="1.400" />
          </Svg>
        </div>
        <span className="ml-[6px] text-[#6a7480] text-[13px]">›</span>
        <div className="ml-[7px] w-[20px] h-[20px] relative">
          <div className="absolute right-0 top-0 w-[11px] h-[11px] bg-[#7cc0f5]" />
          <div className="absolute left-0 bottom-0 w-[9px] h-[9px] bg-[#b8bcc0]" />
          <div className="absolute left-[9px] top-[11px] w-[1px] h-[9px] bg-[#c9a048]" />
        </div>

        <div className="ml-auto flex items-center">
          <div className="w-[17px] h-[17px] border-x-2 border-[#4a9fe6] border-y border-y-[#4a9fe6] flex items-center justify-center text-[9px] text-[#8ccaf7]">0.0</div>
          <span className="ml-[3px] w-[45px] tracking-[-0.8px]">ミリメートル</span>
          <span className="ml-[5px]"><Caret c="#eef0f2" /></span>
          <div className="ml-[6px]">
            <Svg w={20} h={20}>
              <path d="M2 9V6a5 5 0 0 1 10 0" stroke={BL} strokeWidth="1.800" />
              <rect x="7" y="8" width="12" height="11" fill="#8ccaf7" />
              <circle cx="13" cy="12" r="2" fill="#fff" />
              <rect x="12" y="12" width="2" height="5" fill="#fff" />
            </Svg>
          </div>
          <span className="ml-[2px] w-[40px] text-[10px] tracking-[-0.5px]">0.299953</span>
          <span className="ml-[1px]"><Caret c="#eef0f2" /></span>
          <div className="ml-[5px] flex items-center gap-[4px]">
            <Svg w={20} h={20}>
              <path d="M2 2H12V16H7V6" stroke="#b8c0ca" />
              <path d="M2 19 18 2" stroke="#c9ced4" />
              <path d="M11 7l3 6 5 5h-5l-3-3-3 3H4l5-5z" fill="#a9d5f7" />
            </Svg>
            <Svg w={20} h={20}>
              <path d="M9 1l2 8 6 8h-5L9 14l-3 3H1l6-8z" fill="#a9d5f7" />
              <circle cx="15" cy="14" r="3" fill="#eef0f2" />
            </Svg>
            <Svg w={20} h={20}>
              <path d="M10 4l2 6 6 8h-5l-3-3-3 3H2l6-8z" fill="#a9d5f7" />
              <path d="M9 1 7 6h3L8 10M14 1l-2 5h3l-2 4" stroke="#eef0f2" />
            </Svg>
            <Svg w={20} h={20}>
              <rect x="2" y="7" width="9" height="9" stroke="#d0d5da" />
              <circle cx="14" cy="6" r="4" stroke="#d0d5da" />
              <path d="M10 13l3-3 3 3-3 3z" stroke="#d0d5da" />
            </Svg>
            <Gear s={19} />
          </div>
          <span className="ml-[2px] w-[186px] text-[10px] tracking-[-0.25px]">2D 製図と注釈 - 次からの移行 ZWCAD_2025</span>
          <div className="ml-[8px] flex items-center gap-[6px] mr-[16px]">
            <Svg w={18} h={18}>
              <rect x="2" y="3" width="14" height="12" stroke={BL} strokeWidth="1.300" />
              <path d="M5 1V3M9 1V3M13 1V3M5 15V17M9 15V17M13 15V17" stroke={BL} />
              <path d="M10 4 6 10H9L8 14 12 8H9z" fill={YE} />
            </Svg>
            <Svg w={18} h={18}>
              <path d="M2 2 7 7M16 2 11 7M2 16 7 11M16 16 11 11" stroke="#eef0f2" strokeWidth="1.400" />
              <path d="M2 7V2H7M11 2H16V7M2 11V16H7M11 16H16V11" stroke="#eef0f2" strokeWidth="1.400" />
            </Svg>
            <Svg w={18} h={18}>
              <path d="M1 3H17M1 9H17M1 15H17" stroke={BL} strokeWidth="2.400" />
            </Svg>
          </div>
        </div>
        <div className="absolute right-0 bottom-0 w-0 h-0 border-l-[6px] border-l-transparent border-b-[6px] border-b-[#9aa3ad]" />
      </div>
      <div className="h-[3px] shrink-0 bg-[#1a1c1f]" />

      {/* watermark */}
      <div className="absolute inset-0 pointer-events-none overflow-hidden">
        {marks.map((m) => (
          <span
            key={`${m.x}-${m.y}`}
            className="absolute -translate-x-1/2 -translate-y-1/2 -rotate-[20deg] text-[13px] leading-none whitespace-nowrap text-[#808080]/15 font-['Noto_Sans_CJK_JP',sans-serif]"
            style={{ left: m.x, top: m.y }}
          >
            小林拓也
          </span>
        ))}
      </div>
    </div>
  );
}
